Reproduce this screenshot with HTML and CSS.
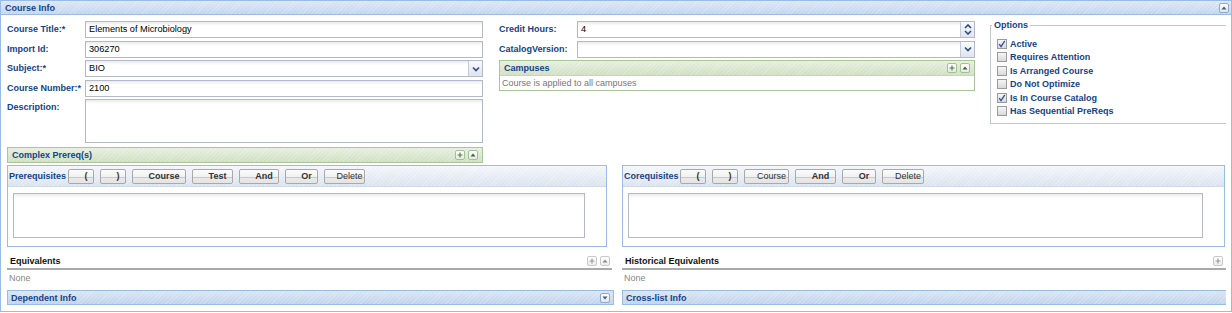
FILE: index.html
```html
<!DOCTYPE html>
<html lang="en">
<head>
  <meta charset="UTF-8">
  <link rel="stylesheet" href="styles.css">
  <title>Course Info</title>
</head>
<body>
<div class="window">
  <div class="win-head">
    <span class="win-title">Course Info</span>
    <span class="tool tool-blue"><svg width="8" height="8" viewBox="0 0 8 8"><path d="M1.5 5.5h5L4 2.5z" fill="#4a5b73"/></svg></span>
  </div>

  <div class="win-body">
    <div class="top">
      <!-- left column -->
      <div class="col">
        <div class="field"><span class="lbl">Course Title:*</span><div class="input">Elements of Microbiology</div></div>
        <div class="field"><span class="lbl">Import Id:</span><div class="input">306270</div></div>
        <div class="field">
          <span class="lbl">Subject:*</span>
          <div class="input">BIO
            <span class="trigger"><svg width="8" height="6" viewBox="0 0 8 6"><path d="M1 1.5l3 3 3-3" fill="none" stroke="#2b4a82" stroke-width="1.6"/></svg></span>
          </div>
        </div>
        <div class="field"><span class="lbl">Course Number:*</span><div class="input">2100</div></div>
        <div class="field"><span class="lbl">Description:</span><div class="input textarea"></div></div>
        <div class="ghead prereq-head">
          <span>Complex Prereq(s)</span>
          <span class="tools">
            <span class="tool"><svg width="8" height="8" viewBox="0 0 8 8"><path d="M4 1.5v5M1.5 4h5" stroke="#5a7a52" stroke-width="1.2"/></svg></span>
            <span class="tool"><svg width="8" height="8" viewBox="0 0 8 8"><path d="M1.5 5.5h5L4 2.5z" fill="#4a5b4a"/></svg></span>
          </span>
        </div>
      </div>

      <!-- middle column -->
      <div class="col">
        <div class="field">
          <span class="lbl">Credit Hours:</span>
          <div class="input">4
            <span class="trigger spin">
              <svg width="8" height="5" viewBox="0 0 8 5"><path d="M1 4l3-3 3 3" fill="none" stroke="#2b4a82" stroke-width="1.6"/></svg>
              <svg width="8" height="5" viewBox="0 0 8 5"><path d="M1 1l3 3 3-3" fill="none" stroke="#2b4a82" stroke-width="1.6"/></svg>
            </span>
          </div>
        </div>
        <div class="field">
          <span class="lbl">CatalogVersion:</span>
          <div class="input">
            <span class="trigger"><svg width="8" height="6" viewBox="0 0 8 6"><path d="M1 1.5l3 3 3-3" fill="none" stroke="#2b4a82" stroke-width="1.6"/></svg></span>
          </div>
        </div>
        <div class="gpanel">
          <div class="ghead">
            <span>Campuses</span>
            <span class="tools">
              <span class="tool"><svg width="8" height="8" viewBox="0 0 8 8"><path d="M4 1.5v5M1.5 4h5" stroke="#5a7a52" stroke-width="1.2"/></svg></span>
              <span class="tool"><svg width="8" height="8" viewBox="0 0 8 8"><path d="M1.5 5.5h5L4 2.5z" fill="#4a5b4a"/></svg></span>
            </span>
          </div>
          <div class="gbody">Course is applied to all campuses</div>
        </div>
      </div>

      <!-- options -->
      <fieldset class="options">
        <legend>Options</legend>
        <div class="checks">
          <div class="check"><span class="box on"></span>Active</div>
          <div class="check"><span class="box"></span>Requires Attention</div>
          <div class="check"><span class="box"></span>Is Arranged Course</div>
          <div class="check"><span class="box"></span>Do Not Optimize</div>
          <div class="check"><span class="box on"></span>Is In Course Catalog</div>
          <div class="check"><span class="box"></span>Has Sequential PreReqs</div>
        </div>
      </fieldset>
    </div>

    <div class="reqs">
      <div class="rpanel">
        <div class="tbar">
          <span class="tlabel">Prerequisites</span>
          <span class="btn w26">(</span>
          <span class="btn w26">)</span>
          <span class="btn w54">Course</span>
          <span class="btn w41">Test</span>
          <span class="btn w40">And</span>
          <span class="btn w33">Or</span>
          <span class="btn w41 thin">Delete</span>
        </div>
        <div class="rbody"><div class="input textarea big"></div></div>
      </div>
      <div class="rpanel">
        <div class="tbar">
          <span class="tlabel short">Corequisites</span>
          <span class="btn w26">(</span>
          <span class="btn w26">)</span>
          <span class="btn w45 thin">Course</span>
          <span class="btn w41">And</span>
          <span class="btn w34">Or</span>
          <span class="btn w42 thin">Delete</span>
        </div>
        <div class="rbody"><div class="input textarea big"></div></div>
      </div>
    </div>

    <div class="equivs">
      <div>
        <div class="ehead">
          <span>Equivalents</span>
          <span class="tools">
            <span class="tool gray"><svg width="8" height="8" viewBox="0 0 8 8"><path d="M4 1.5v5M1.5 4h5" stroke="#9a9a9a" stroke-width="1.2"/></svg></span>
            <span class="tool gray"><svg width="8" height="8" viewBox="0 0 8 8"><path d="M1.5 5.5h5L4 2.5z" fill="#8a8a8a"/></svg></span>
          </span>
        </div>
        <div class="ebody">None</div>
      </div>
      <div>
        <div class="ehead">
          <span>Historical Equivalents</span>
          <span class="tools">
            <span class="tool gray"><svg width="8" height="8" viewBox="0 0 8 8"><path d="M4 1.5v5M1.5 4h5" stroke="#9a9a9a" stroke-width="1.2"/></svg></span>
            <span class="tool gray"><svg width="8" height="8" viewBox="0 0 8 8"><path d="M1.5 5.5h5L4 2.5z" fill="#8a8a8a"/></svg></span>
          </span>
        </div>
        <div class="ebody">None</div>
      </div>
    </div>

    <div class="bars">
      <div class="bbar">
        <span>Dependent Info</span>
        <span class="tool tool-blue"><svg width="8" height="8" viewBox="0 0 8 8"><path d="M1.5 2.5h5L4 5.5z" fill="#4a5b73"/></svg></span>
      </div>
      <div class="bbar">
        <span>Cross-list Info</span>
        <span class="tool tool-blue"><svg width="8" height="8" viewBox="0 0 8 8"><path d="M1.5 2.5h5L4 5.5z" fill="#4a5b73"/></svg></span>
      </div>
    </div>
  </div>
</div>
</body>
</html>
```

FILE: styles.css
```css
body {
  margin: 0;
  font-family: "Liberation Sans", Arial, sans-serif;
  font-size: 9px;
  color: #000;
  background: #fff;
}

.window {
  width: 1230px;
  height: 310px;
  border: 1px solid #99bbe8;
}

.win-head {
  display: flex;
  align-items: center;
  justify-content: space-between;
  height: 13px;
  padding: 0 2px 0 4px;
  border-bottom: 1px solid #99bbe8;
  background:
    repeating-linear-gradient(135deg, rgba(255,255,255,.2) 0 1px, transparent 1px 3px),
    linear-gradient(#dce7f5, #c3d5ec);
  color: #15428b;
  font-weight: bold;
}

.win-body {
  width: 1219px;
  padding: 6px 0 0 6px;
  overflow: hidden;
}

/* top area */
.top {
  display: grid;
  grid-template-columns: 476px 476px 260px;
  column-gap: 16px;
  align-items: start;
}

.col {
  display: flex;
  flex-direction: column;
  gap: 2.5px;
}

.field {
  display: flex;
  align-items: flex-start;
}

.lbl {
  flex: none;
  width: 78px;
  padding-top: 3px;
  line-height: 11px;
  font-weight: bold;
  color: #15428b;
}

.input {
  flex: 1;
  display: flex;
  height: 15px;
  padding: 0 0 0 3px;
  border: 1px solid #b5b8c8;
  background: linear-gradient(#ebebeb, #fff 4px);
  line-height: 15px;
  font-size: 9.2px;
}

.trigger {
  margin-left: auto;
  width: 13px;
  display: flex;
  flex-direction: column;
  align-items: center;
  justify-content: center;
  gap: 1px;
  border-left: 1px solid #c4c9d6;
  background: linear-gradient(#f7f9fc, #dfe5ee);
}

.textarea {
  height: 42px;
}

.ghead {
  display: flex;
  align-items: center;
  justify-content: space-between;
  height: 14px;
  padding: 0 4px 0 4px;
  border: 1px solid #a9c59a;
  background:
    repeating-linear-gradient(135deg, rgba(255,255,255,.2) 0 1px, transparent 1px 3px),
    linear-gradient(#e6efdf, #cfe0c1);
  color: #15428b;
  font-weight: bold;
}

.prereq-head {
  margin-top: 1.5px;
}

.tools {
  display: flex;
  gap: 3px;
}

.tool {
  display: inline-flex;
  align-items: center;
  justify-content: center;
  width: 10px;
  height: 10px;
  box-sizing: border-box;
  border: 1px solid #a3bf95;
  border-radius: 2px;
  background: linear-gradient(#fff, #e3ecdc);
}

.tool.gray {
  border-color: #c8c8c8;
  background: linear-gradient(#fff, #ececec);
}

.tool-blue {
  border-color: #8fa9cc;
  background: linear-gradient(#fff, #dde6f2);
}

.gpanel {
  border: 1px solid #a9c59a;
}

.gpanel .ghead {
  border: 0;
  border-bottom: 1px solid #c4d8b8;
}

.gbody {
  height: 14px;
  padding-left: 2px;
  line-height: 14px;
  color: #777;
}

/* options */
.options {
  margin: -1px 0 0 -1px;
  padding: 0 0 0 6px;
  height: 104px;
  box-sizing: border-box;
  min-width: 0;
  border: 1px solid #c2c7d2;
  border-right: 0;
}

.options legend {
  margin-left: -5px;
  padding: 0 2px;
  line-height: 11px;
  font-weight: bold;
  color: #15428b;
}

.checks {
  padding-top: 6px;
}

.check {
  display: flex;
  align-items: center;
  gap: 3px;
  height: 13.5px;
  font-weight: bold;
  color: #15428b;
}

.box {
  width: 10px;
  height: 10px;
  box-sizing: border-box;
  border: 1px solid #9a9a9a;
  background: linear-gradient(#f6f6f6, #d9d9d9);
}

.box.on {
  background:
    url("data:image/svg+xml,%3Csvg xmlns='http://www.w3.org/2000/svg' width='8' height='8'%3E%3Cpath d='M1.2 4.2l1.8 2.4L6.8 .8' fill='none' stroke='%233050a0' stroke-width='1.3'/%3E%3C/svg%3E") center/8px 8px no-repeat,
    linear-gradient(#f6f6f6, #d9d9d9);
}

/* prereq / coreq */
.reqs {
  display: grid;
  grid-template-columns: 600px 603px;
  column-gap: 15px;
  margin-top: 2px;
}

.rpanel {
  border: 1px solid #99bbe8;
}

.tbar {
  display: flex;
  align-items: center;
  gap: 6px;
  height: 20px;
  padding-left: 1px;
  border-bottom: 1px solid #d0dbe9;
  background:
    repeating-linear-gradient(135deg, rgba(255,255,255,.25) 0 1px, transparent 1px 3px),
    linear-gradient(#f3f6fa, #dbe3ee);
}

.tlabel {
  width: 53px;
  font-weight: bold;
  color: #15428b;
  white-space: nowrap;
}

.tlabel.short {
  width: 50px;
}

.btn {
  height: 15px;
  box-sizing: border-box;
  padding-left: 10px;
  border: 1px solid #a9a9a9;
  border-radius: 2px;
  background: linear-gradient(#fbfbfb 0, #f1f1f1 55%, #c9c9c9 56%, #c9c9c9 62%, #e9e9e9 63%, #e4e4e4 100%);
  text-align: center;
  line-height: 13px;
  font-weight: bold;
  color: #333;
}

.btn.thin { font-weight: normal; }

.w26 { width: 26px; }
.w33 { width: 33px; }
.w34 { width: 34px; }
.w40 { width: 40px; }
.w41 { width: 41px; }
.w42 { width: 42px; }
.w45 { width: 45px; }
.w54 { width: 54px; }

.rbody {
  padding: 6px 21px 8px 5px;
}

.textarea.big {
  height: 43px;
  padding: 0;
}

/* equivalents */
.equivs {
  display: grid;
  grid-template-columns: 605px 616px;
  column-gap: 10px;
  margin-top: 6px;
}

.ehead {
  display: flex;
  align-items: center;
  justify-content: space-between;
  height: 15px;
  padding: 0 2px 0 3px;
  border-bottom: 2px solid #a9a9a9;
  font-weight: bold;
  color: #111;
}

.ebody {
  padding: 3px 2px 0;
  line-height: 11px;
  color: #888;
}

/* bottom bars */
.bars {
  display: grid;
  grid-template-columns: 607px 620px;
  column-gap: 8px;
  margin-top: 6px;
}

.bbar {
  display: flex;
  align-items: center;
  justify-content: space-between;
  height: 13px;
  padding: 0 3px 0 3px;
  border: 1px solid #99bbe8;
  background:
    repeating-linear-gradient(135deg, rgba(255,255,255,.2) 0 1px, transparent 1px 3px),
    linear-gradient(#d9e5f4, #c1d3eb);
  color: #15428b;
  font-weight: bold;
}
```
